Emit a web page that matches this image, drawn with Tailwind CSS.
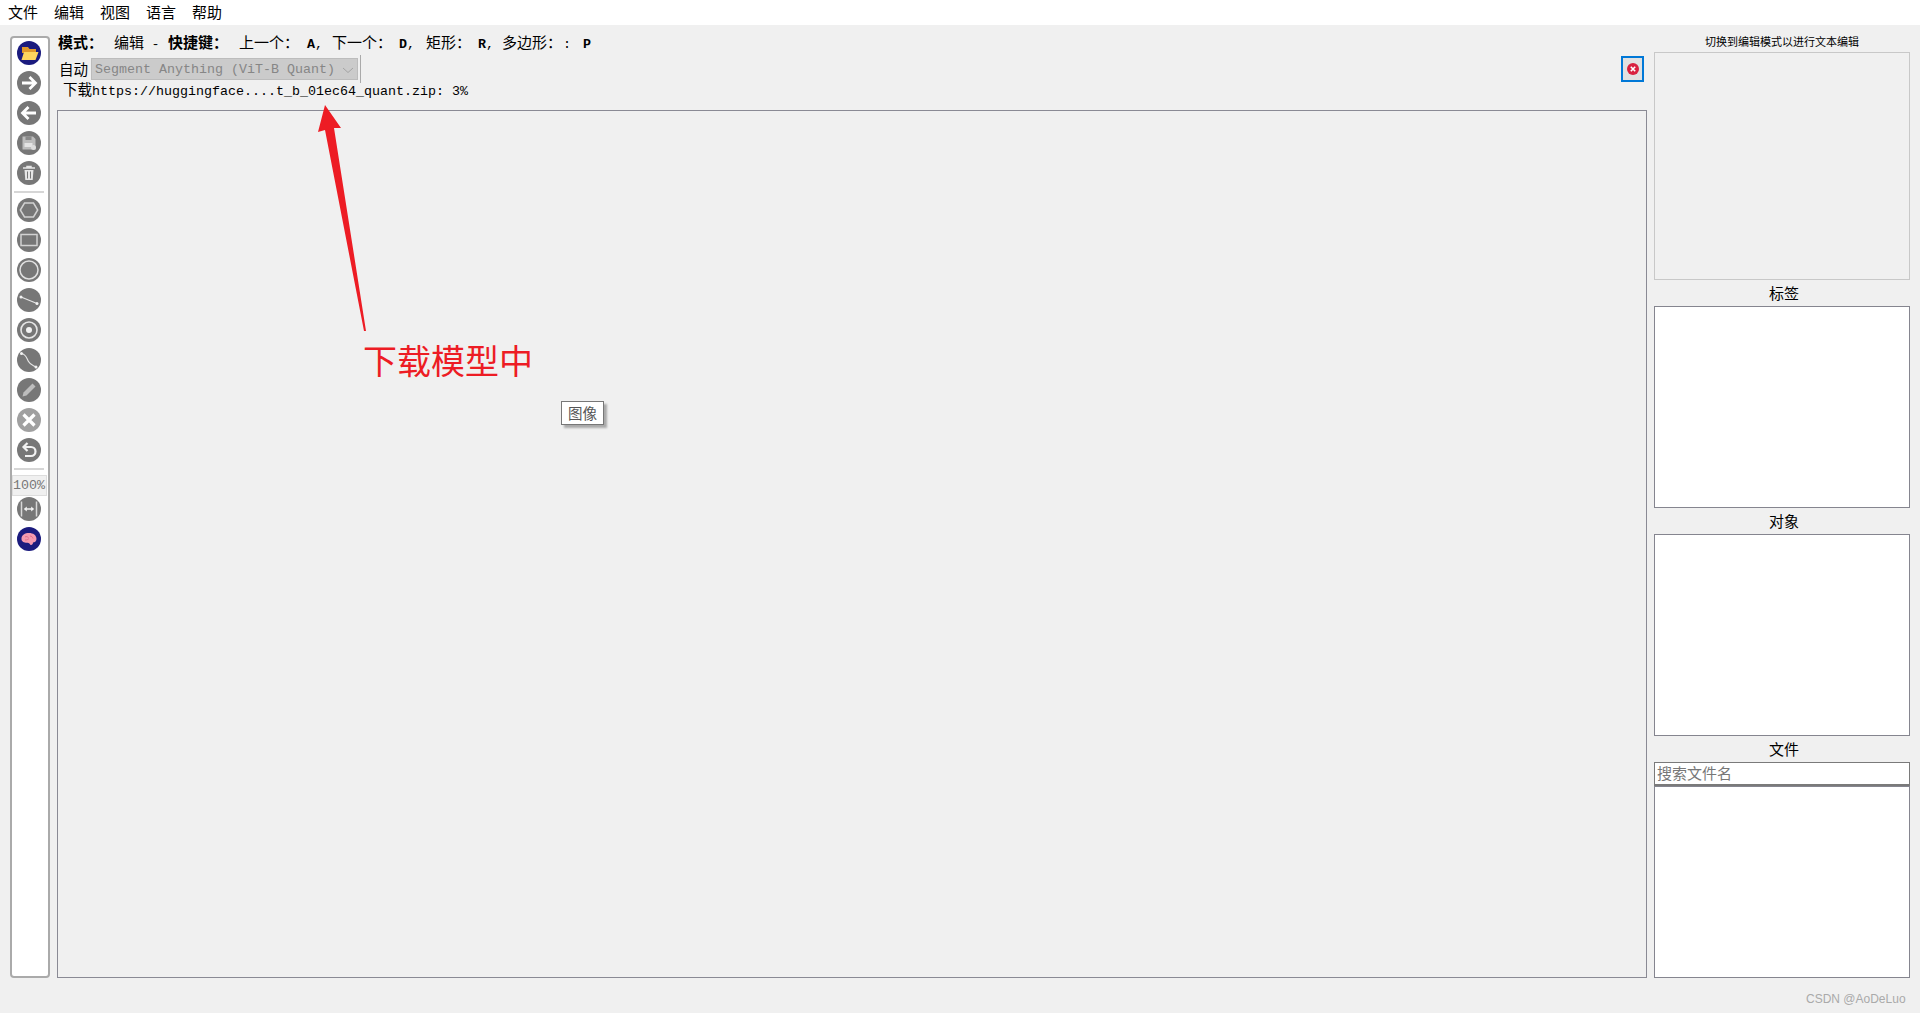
<!DOCTYPE html>
<html lang="zh-CN">
<head>
  <meta charset="UTF-8">
  <meta name="viewport" content="width=device-width, initial-scale=1.0">
  <title>Labelme</title>
  <script src="https://cdn.jsdelivr.net/npm/@tailwindcss/browser@4"></script>
</head>
<body class="relative h-[1013px] w-[1920px] overflow-hidden bg-[#f0f0f0] text-black font-['Liberation_Mono','Noto_Sans_CJK_SC',monospace]">

<!-- Menu bar -->
<nav class="flex h-[25px] items-center bg-white pl-[8px] gap-[16px] text-[15px] font-['Noto_Sans_CJK_SC',sans-serif]">
  <span>文件</span><span>编辑</span><span>视图</span><span>语言</span><span>帮助</span>
</nav>

<div class="flex h-[953px] pl-[10px] gap-[7px]">

  <!-- Toolbar -->
  <aside class="mt-[11px] flex w-[40px] shrink-0 flex-col items-center gap-[6px] rounded-[4px] border-2 border-[#aaaaaa] bg-white pt-[3px] pr-[2px]">
    <svg class="h-6 w-6 shrink-0" viewBox="0 0 24 24"><circle cx="12" cy="12" r="12" fill="#1b1b7e"/><path d="M5 6h6l1.500 2H19v4H5z" fill="#e0982a"/><path d="M4.500 19l2.500-8H21.500L18.500 19z" fill="#ffd55e"/></svg>
    <svg class="h-6 w-6 shrink-0" viewBox="0 0 24 24"><circle cx="12" cy="12" r="12" fill="#777777"/><path d="M5 12h13M12.500 6l6 6-6 6" fill="none" stroke="#fff" stroke-width="2.800"/></svg>
    <svg class="h-6 w-6 shrink-0" viewBox="0 0 24 24"><circle cx="12" cy="12" r="12" fill="#777777"/><path d="M19 12H6M11.500 6l-6 6 6 6" fill="none" stroke="#fff" stroke-width="2.800"/></svg>
    <svg class="h-6 w-6 shrink-0" viewBox="0 0 24 24"><circle cx="12" cy="12" r="12" fill="#777777"/><path d="M5.500 5.500h10.500l2.500 2.500v10.500H5.500z" fill="#bdbdbd"/><rect x="8.500" y="5.500" width="6" height="3.500" fill="#8a8a8a"/><rect x="7.500" y="12" width="8" height="4" fill="#e4e4e4"/><circle cx="16.500" cy="16.500" r="2.500" fill="#dddddd"/></svg>
    <svg class="h-6 w-6 shrink-0" viewBox="0 0 24 24"><circle cx="12" cy="12" r="12" fill="#777777"/><path d="M6 7h12M10 7V5.500h4V7" fill="none" stroke="#e6e6e6" stroke-width="1.500"/><path d="M7.500 9h9l-.8 10H8.300z" fill="#e6e6e6"/><path d="M10.500 10.500v7M13.500 10.500v7" stroke="#777777" stroke-width="1"/></svg>
    <div class="h-[2px] w-[30px] shrink-0 bg-[#d6d6d6]"></div>
    <svg class="-mt-[1px] h-6 w-6 shrink-0" viewBox="0 0 24 24"><circle cx="12" cy="12" r="12" fill="#777777"/><path d="M7.500 5h9l4.200 7-4.200 7h-9L3.300 12z" fill="none" stroke="#d2d2d2" stroke-width="1.500"/></svg>
    <svg class="h-6 w-6 shrink-0" viewBox="0 0 24 24"><circle cx="12" cy="12" r="12" fill="#777777"/><rect x="4" y="6.500" width="16" height="11" fill="none" stroke="#d2d2d2" stroke-width="1.500"/></svg>
    <svg class="h-6 w-6 shrink-0" viewBox="0 0 24 24"><circle cx="12" cy="12" r="12" fill="#777777"/><circle cx="12" cy="12" r="9" fill="none" stroke="#e0e0e0" stroke-width="1.500"/></svg>
    <svg class="h-6 w-6 shrink-0" viewBox="0 0 24 24"><circle cx="12" cy="12" r="12" fill="#777777"/><path d="M4 9l16 6.500" stroke="#e6e6e6" stroke-width="1.200"/><circle cx="4" cy="9" r="1.500" fill="#f2f2f2"/><circle cx="20" cy="15.500" r="1.500" fill="#f2f2f2"/></svg>
    <svg class="h-6 w-6 shrink-0" viewBox="0 0 24 24"><circle cx="12" cy="12" r="12" fill="#777777"/><circle cx="12" cy="12" r="8" fill="none" stroke="#e6e6e6" stroke-width="1.600"/><circle cx="12" cy="12" r="3" fill="#f2f2f2"/></svg>
    <svg class="h-6 w-6 shrink-0" viewBox="0 0 24 24"><circle cx="12" cy="12" r="12" fill="#777777"/><path d="M4.500 5.500C9 6 9.500 10 11.500 13.500S15.500 17 19 19" fill="none" stroke="#e6e6e6" stroke-width="1.200"/><circle cx="4.500" cy="5.500" r="1.500" fill="#f2f2f2"/><circle cx="19" cy="19" r="1.500" fill="#f2f2f2"/></svg>
    <svg class="h-6 w-6 shrink-0" viewBox="0 0 24 24"><circle cx="12" cy="12" r="12" fill="#777777"/><path d="M5.500 18.500l1-4L15.500 5.500l3 3-9 9z" fill="#bdbdbd"/></svg>
    <svg class="h-6 w-6 shrink-0" viewBox="0 0 24 24"><circle cx="12" cy="12" r="12" fill="#a0a0a0"/><path d="M6.500 6.500l11 11M17.500 6.500l-11 11" stroke="#fff" stroke-width="3.200"/></svg>
    <svg class="h-6 w-6 shrink-0" viewBox="0 0 24 24"><circle cx="12" cy="12" r="12" fill="#777777"/><path d="M8 9H14a4.500 4.500 0 0 1 0 9H8" fill="none" stroke="#f2f2f2" stroke-width="2.200"/><path d="M10.500 5l-4 4 4 4" fill="none" stroke="#f2f2f2" stroke-width="2.200"/></svg>
    <div class="h-[2px] w-[30px] shrink-0 bg-[#d6d6d6]"></div>
    <div class="-mt-[1px] -mb-[5px] flex h-[21px] w-[35px] shrink-0 items-center justify-center border border-[#dddddd] bg-[#f0f0f0] text-[13.330px] leading-none text-[#777777]">100%</div>
    <svg class="h-6 w-6 shrink-0" viewBox="0 0 24 24"><circle cx="12" cy="12" r="12" fill="#777777"/><path d="M4.500 4.500v15M19.500 4.500v15" stroke="#d8d8d8" stroke-width="1.500"/><path d="M8 12h8" stroke="#f2f2f2" stroke-width="1.500"/><path d="M6.800 12l3-2.600v5.200zM17.200 12l-3-2.600v5.200z" fill="#f2f2f2"/></svg>
    <svg class="h-6 w-6 shrink-0" viewBox="0 0 24 24"><circle cx="12" cy="12" r="12" fill="#1b1b7e"/><path d="M4.500 11.500C4.500 8 8 6 12 6s7.500 2 7.500 6c0 2.500-2 3.500-3.500 3.500 0 1.500-1 3-2.500 2.500-.5-1-1.500-2-3-2.200-3 .2-6-1-6-3.800z" fill="#f49ab0"/><path d="M8 10c1.500-1 2.500 0 3.500.5M13 9c1.500 0 2.500 1 3 2.500M8 13c2 0 3-.5 4-1.500" fill="none" stroke="#d9647f" stroke-width=".8"/></svg>
  </aside>

  <!-- Center -->
  <main class="flex w-[1590px] shrink-0 flex-col">
    <div class="flex h-[31px] items-start pt-[11px] pl-[1px] text-[15px] leading-[18px]">
      <b class="w-[45px] shrink-0">模式：</b>
      <span class="ml-[11px]">编辑</span>
      <span class="ml-[7.500px] w-[8px] text-[13.330px]">-</span>
      <b class="ml-[8.500px] w-[60px] shrink-0">快捷键：</b>
      <span class="ml-[11px] w-[60px] shrink-0">上一个：</span>
      <b class="ml-[8px] w-[8px] text-[13.330px]">A</b><span class="w-[8px] text-[13.330px]">,</span>
      <span class="ml-[9px] w-[60px] shrink-0">下一个：</span>
      <b class="ml-[7px] w-[8px] text-[13.330px]">D</b><span class="w-[8px] text-[13.330px]">,</span>
      <span class="ml-[11px] w-[45px] shrink-0">矩形：</span>
      <b class="ml-[7px] w-[8px] text-[13.330px]">R</b><span class="w-[8px] text-[13.330px]">,</span>
      <span class="ml-[8px] w-[60px] shrink-0">多边形：</span>
      <span class="ml-[1px] w-[8px] text-[13.330px]">:</span>
      <b class="ml-[12px] text-[13.330px]">P</b>
    </div>
    <div class="flex h-[26px] items-center pr-[3px]">
      <span class="ml-[2px] w-[32px] shrink-0 font-['Noto_Sans_CJK_SC',sans-serif] text-[14.500px]">自动</span>
      <div class="flex h-[22px] w-[267px] shrink-0 items-center justify-between border border-[#bcbcbc] bg-[#cbcbcb] pl-[3px] pr-[4px] pt-[1px] text-[13.330px] text-[#868686]">
        <span>Segment Anything (ViT-B Quant)</span>
        <svg class="h-[10px] w-[10px]" viewBox="0 0 10 10"><path d="M0 3l5 4.500L10 3" fill="none" stroke="#a4a4a4" stroke-width="1"/></svg>
      </div>
      <div class="ml-[2px] h-[28px] w-[1px] bg-[#aaaaaa]"></div>
      <button class="ml-auto flex h-[26px] w-[23px] items-center justify-center border-2 border-[#0078d7] bg-[#e1e1e1]">
        <svg class="h-3 w-3" viewBox="0 0 12 12"><circle cx="6" cy="6" r="6" fill="#d9203f"/><path d="M3.800 3.800l4.400 4.400M8.200 3.800L3.800 8.200" stroke="#fff" stroke-width="1.600"/></svg>
      </button>
    </div>
    <div class="h-[28px] whitespace-pre pl-[6px] text-[13.330px] leading-[14px]"><span class="font-['Noto_Sans_CJK_SC',sans-serif] text-[14.500px]">下载</span>https://huggingface....t_b_01ec64_quant.zip: 3%</div>
    <div class="flex-1 border border-[#8a8a94] bg-[#f0f0f0]"></div>
  </main>

  <!-- Right docks -->
  <section class="flex w-[256px] shrink-0 flex-col font-['Noto_Sans_CJK_SC',sans-serif]">
    <div class="flex h-[27px] items-center justify-center text-[11px] pt-[5px]">切换到编辑模式以进行文本编辑</div>
    <div class="h-[228px] border border-[#c8c8c8] bg-[#f0f0f0]"></div>
    <div class="flex h-[26px] items-center justify-center pl-[4px] text-[15px]">标签</div>
    <div class="h-[202px] border border-[#85858f] bg-white"></div>
    <div class="flex h-[26px] items-center justify-center pl-[4px] text-[15px]">对象</div>
    <div class="h-[202px] border border-[#85858f] bg-white"></div>
    <div class="flex h-[26px] items-center justify-center pl-[4px] text-[15px]">文件</div>
    <input class="h-[24px] w-full border border-b-2 border-[#7a7a7a] bg-white px-[2px] pb-[2px] text-[15px] text-[#777777] outline-none placeholder:text-[#777777]" placeholder="搜索文件名">
    <div class="flex-1 border border-[#85858f] bg-white"></div>
  </section>
</div>

<!-- Annotation drawn over the screenshot -->
<svg class="absolute left-[300px] top-[90px] h-[250px] w-[80px]" viewBox="0 0 80 250"><polygon points="25,15 41,38 34,38 66,241 64,241 25,40 18,42" fill="#ed1c24"/></svg>
<div class="absolute left-[363px] top-[338px] font-['Noto_Sans_CJK_SC',sans-serif] text-[34px] leading-[44px] text-[#ed1c24]">下载模型中</div>

<!-- Canvas tooltip -->
<div class="absolute left-[561px] top-[401px] flex h-[24px] w-[43px] items-center justify-center border border-[#777777] bg-white font-['Noto_Sans_CJK_SC',sans-serif] text-[14.500px] text-[#555555] shadow-[3px_3px_2px_#aaaaaa]">图像</div>

<div class="absolute left-[1806px] top-[990px] font-['Liberation_Sans',sans-serif] text-[12px] leading-[18px] text-[#aaaaaa]">CSDN @AoDeLuo</div>
</body>
</html>
